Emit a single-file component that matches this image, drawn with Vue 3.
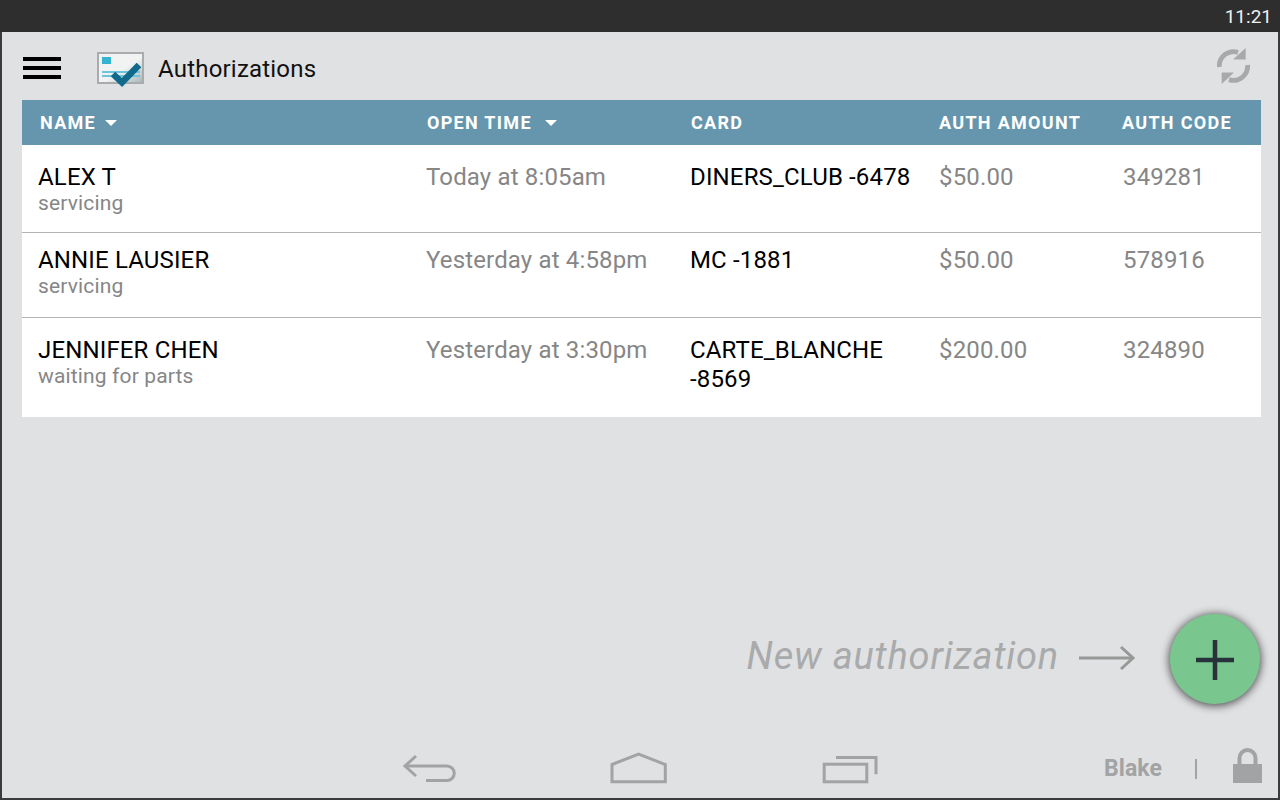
<template>
  <div class="screen">
    <div class="status-bar"><span class="clock">11:21</span></div>
    <div class="frame">
      <header class="action-bar">
        <div class="burger"><i></i><i></i><i></i></div>
        <svg class="logo" width="48" height="36" viewBox="0 0 48 36">
          <defs>
            <linearGradient id="shade" x1="0" y1="0" x2="1" y2="1">
              <stop offset="0.55" stop-color="#f1f3f2" />
              <stop offset="1" stop-color="#a9b4b6" />
            </linearGradient>
          </defs>
          <rect x="1" y="1" width="45" height="30" fill="url(#shade)" stroke="#a9acad" stroke-width="2" />
          <rect x="5" y="5" width="9" height="7" fill="#35b4d2" />
          <rect x="5" y="19" width="38" height="2" fill="#6cc5dc" />
          <rect x="5" y="23" width="38" height="2" fill="#6cc5dc" />
          <path d="M16 22 L25 30.5 L42 13" fill="none" stroke="#0f6a8b" stroke-width="6.5" />
        </svg>
        <h1 class="title">Authorizations</h1>
        <svg class="sync" width="36" height="38" viewBox="0 0 36 38" fill="none">
          <path d="M2.4 20 A14.2 14.2 0 0 1 21 5.4" stroke="#a8a9aa" stroke-width="4.8" />
          <path d="M30.6 18 A14.2 14.2 0 0 1 12 32.6" stroke="#a8a9aa" stroke-width="4.8" />
          <path d="M28.7 1 V12.5 H16 Z" fill="#a8a9aa" />
          <path d="M4.7 37 V25.5 H17 Z" fill="#a8a9aa" />
        </svg>
      </header>

      <section class="table">
        <div class="row head">
          <div v-for="col in columns" :key="col.label" class="th">
            {{ col.label }}<span v-if="col.sort" class="caret" :class="col.sort"></span>
          </div>
        </div>
        <div v-for="item in rows" :key="item.name" class="row body" :class="item.size">
          <div class="cell">
            <div class="name">{{ item.name }}</div>
            <div class="sub">{{ item.status }}</div>
          </div>
          <div class="cell muted">{{ item.time }}</div>
          <div class="cell dark">{{ item.card }}</div>
          <div class="cell muted amount">{{ item.amount }}</div>
          <div class="cell muted code">{{ item.code }}</div>
        </div>
      </section>

      <div class="spacer"></div>

      <div class="new-row">
        <span class="new-label">New authorization</span>
        <svg class="arrow" width="58" height="26" viewBox="0 0 58 26" fill="none" stroke="#979898">
          <path d="M1 13 H55" stroke-width="3" />
          <path d="M43 2 L55 13 L43 24" stroke-width="3" />
        </svg>
        <div class="fab">
          <svg width="40" height="42" viewBox="0 0 40 42">
            <path d="M20 2 V42 M1 22 H39" stroke="#27323a" stroke-width="4.5" />
          </svg>
        </div>
      </div>

      <footer class="nav-bar">
        <div class="nav-icons">
          <svg width="54" height="32" viewBox="0 0 54 32" fill="none" stroke="#a2a3a4" stroke-width="3">
            <path d="M14 4 L3 14 L14 24" />
            <path d="M3 14 H45 A7.25 7.25 0 0 1 45 28.5 H24" />
          </svg>
          <svg width="58" height="32" viewBox="0 0 58 32" fill="none" stroke="#a2a3a4" stroke-width="3">
            <path d="M2 12.5 L28.6 2 L55.3 12.5 V29.8 H2 Z" />
          </svg>
          <svg width="56" height="32" viewBox="0 0 56 32" fill="none" stroke="#a2a3a4" stroke-width="3">
            <rect x="2.2" y="12.2" width="42.6" height="17.6" />
            <path d="M14 5.5 H54 V22.3" />
          </svg>
        </div>
        <div class="nav-user">
          <span class="user">Blake</span>
          <span class="divider"></span>
          <svg class="lock" width="29" height="35" viewBox="0 0 29 35">
            <path d="M6.5 17 V10 A8 8 0 0 1 22.5 10 V17" fill="none" stroke="#a2a3a4" stroke-width="4" />
            <rect x="0" y="16" width="29" height="19" fill="#a2a3a4" />
          </svg>
        </div>
      </footer>
    </div>
  </div>
</template>

<script setup>
const columns = [
  { label: 'NAME', sort: 'near' },
  { label: 'OPEN TIME', sort: 'far' },
  { label: 'CARD' },
  { label: 'AUTH AMOUNT' },
  { label: 'AUTH CODE' },
]

const rows = [
  { name: 'ALEX T', status: 'servicing', time: 'Today at 8:05am', card: 'DINERS_CLUB -6478', amount: '$50.00', code: '349281', size: 'first' },
  { name: 'ANNIE LAUSIER', status: 'servicing', time: 'Yesterday at 4:58pm', card: 'MC -1881', amount: '$50.00', code: '578916', size: 'second' },
  { name: 'JENNIFER CHEN', status: 'waiting for parts', time: 'Yesterday at 3:30pm', card: 'CARTE_BLANCHE -8569', amount: '$200.00', code: '324890', size: 'third' },
]
</script>

<style>
html, body {
  margin: 0;
  background: #e0e1e3;
}
</style>

<style scoped>
.screen {
  width: 1280px;
  height: 800px;
  display: flex;
  flex-direction: column;
  font-family: Roboto, "Liberation Sans", sans-serif;
  overflow: hidden;
}

.status-bar {
  height: 32px;
  flex: none;
  background: #2e2e2e;
  color: #f0f0f0;
  display: flex;
  justify-content: flex-end;
  align-items: center;
  padding-right: 8px;
  font-size: 19px;
}

.frame {
  flex: 1;
  min-height: 0;
  display: flex;
  flex-direction: column;
  background: #e0e1e3;
  border: solid #3a3b3c;
  border-width: 0 2px 2px;
  padding: 0 17px 0 20px;
}

.action-bar {
  height: 68px;
  flex: none;
  display: flex;
  align-items: flex-start;
}

.burger {
  width: 38px;
  margin: 25px 0 0 1px;
  display: flex;
  flex-direction: column;
  gap: 5px;
}

.burger i {
  height: 4px;
  background: #000;
}

.logo {
  margin: 20px 0 0 36px;
}

.title {
  margin: 23px 0 0 13px;
  font-size: 24px;
  line-height: 28px;
  letter-spacing: 0.2px;
  font-weight: 400;
  color: #111;
  flex: 1;
}

.sync {
  margin: 15px 8px 0 0;
}

.table {
  flex: none;
}

.row {
  display: grid;
  grid-template-columns: 404px 264px 248px 183px 1fr;
}

.head {
  height: 45px;
  align-items: center;
  background: #6696ad;
  color: #fff;
  font-size: 18px;
  font-weight: 700;
  letter-spacing: 1.3px;
}

.th {
  padding-left: 1px;
}

.th:first-child {
  padding-left: 18px;
}

.caret {
  display: inline-block;
  vertical-align: middle;
  width: 0;
  height: 0;
  border: 6px solid transparent;
  border-top: 6px solid #fff;
  border-bottom: 0;
  margin-bottom: 3px;
}

.caret.near {
  margin-left: 9px;
}

.caret.far {
  margin-left: 13px;
}

.body {
  background: #fff;
  border-bottom: 1px solid #b4b4b4;
  font-size: 24px;
  line-height: 29px;
  letter-spacing: 0.15px;
  box-sizing: border-box;
}

.body:last-child {
  border-bottom: 0;
}

.first {
  height: 88px;
  padding-top: 18px;
}

.second {
  height: 85px;
  padding-top: 13px;
}

.third {
  height: 99px;
  padding-top: 18px;
}

.cell:first-child {
  padding-left: 16px;
}

.amount {
  padding-left: 1px;
}

.code {
  padding-left: 2px;
}

.name,
.dark {
  color: #000;
}

.muted {
  color: #868686;
}

.sub {
  margin-top: -1px;
  font-size: 21px;
  line-height: 24px;
  color: #868686;
}

.spacer {
  flex: 1;
}

.new-row {
  display: flex;
  align-items: center;
  justify-content: flex-end;
  margin: 0 1px 32px 0;
}

.new-label {
  margin-bottom: 6px;
  font-size: 38px;
  font-style: italic;
  font-weight: 400;
  color: #a9aaab;
  letter-spacing: 0.8px;
}

.arrow {
  margin: 0 2px 2px 19px;
}

.fab {
  width: 90px;
  height: 90px;
  margin-left: 32px;
  border-radius: 50%;
  background: #7ac68f;
  box-shadow: 0 1px 8px 1px rgba(0, 0, 0, 0.65);
  display: flex;
  align-items: center;
  justify-content: center;
}

.nav-bar {
  height: 62px;
  flex: none;
  position: relative;
  display: flex;
  align-items: center;
  justify-content: flex-end;
}

.nav-icons {
  position: absolute;
  left: 380px;
  top: 16px;
  display: flex;
  gap: 154px;
}

.nav-user {
  display: flex;
  align-items: center;
  margin-right: -1px;
}

.user {
  margin-top: 2px;
  font-size: 23px;
  letter-spacing: 0.1px;
  font-weight: 700;
  color: #a2a3a4;
}

.divider {
  width: 2px;
  height: 20px;
  margin: 4px 36px 0 33px;
  background: #a2a3a4;
}

.lock {
  margin-top: -3px;
}
</style>
